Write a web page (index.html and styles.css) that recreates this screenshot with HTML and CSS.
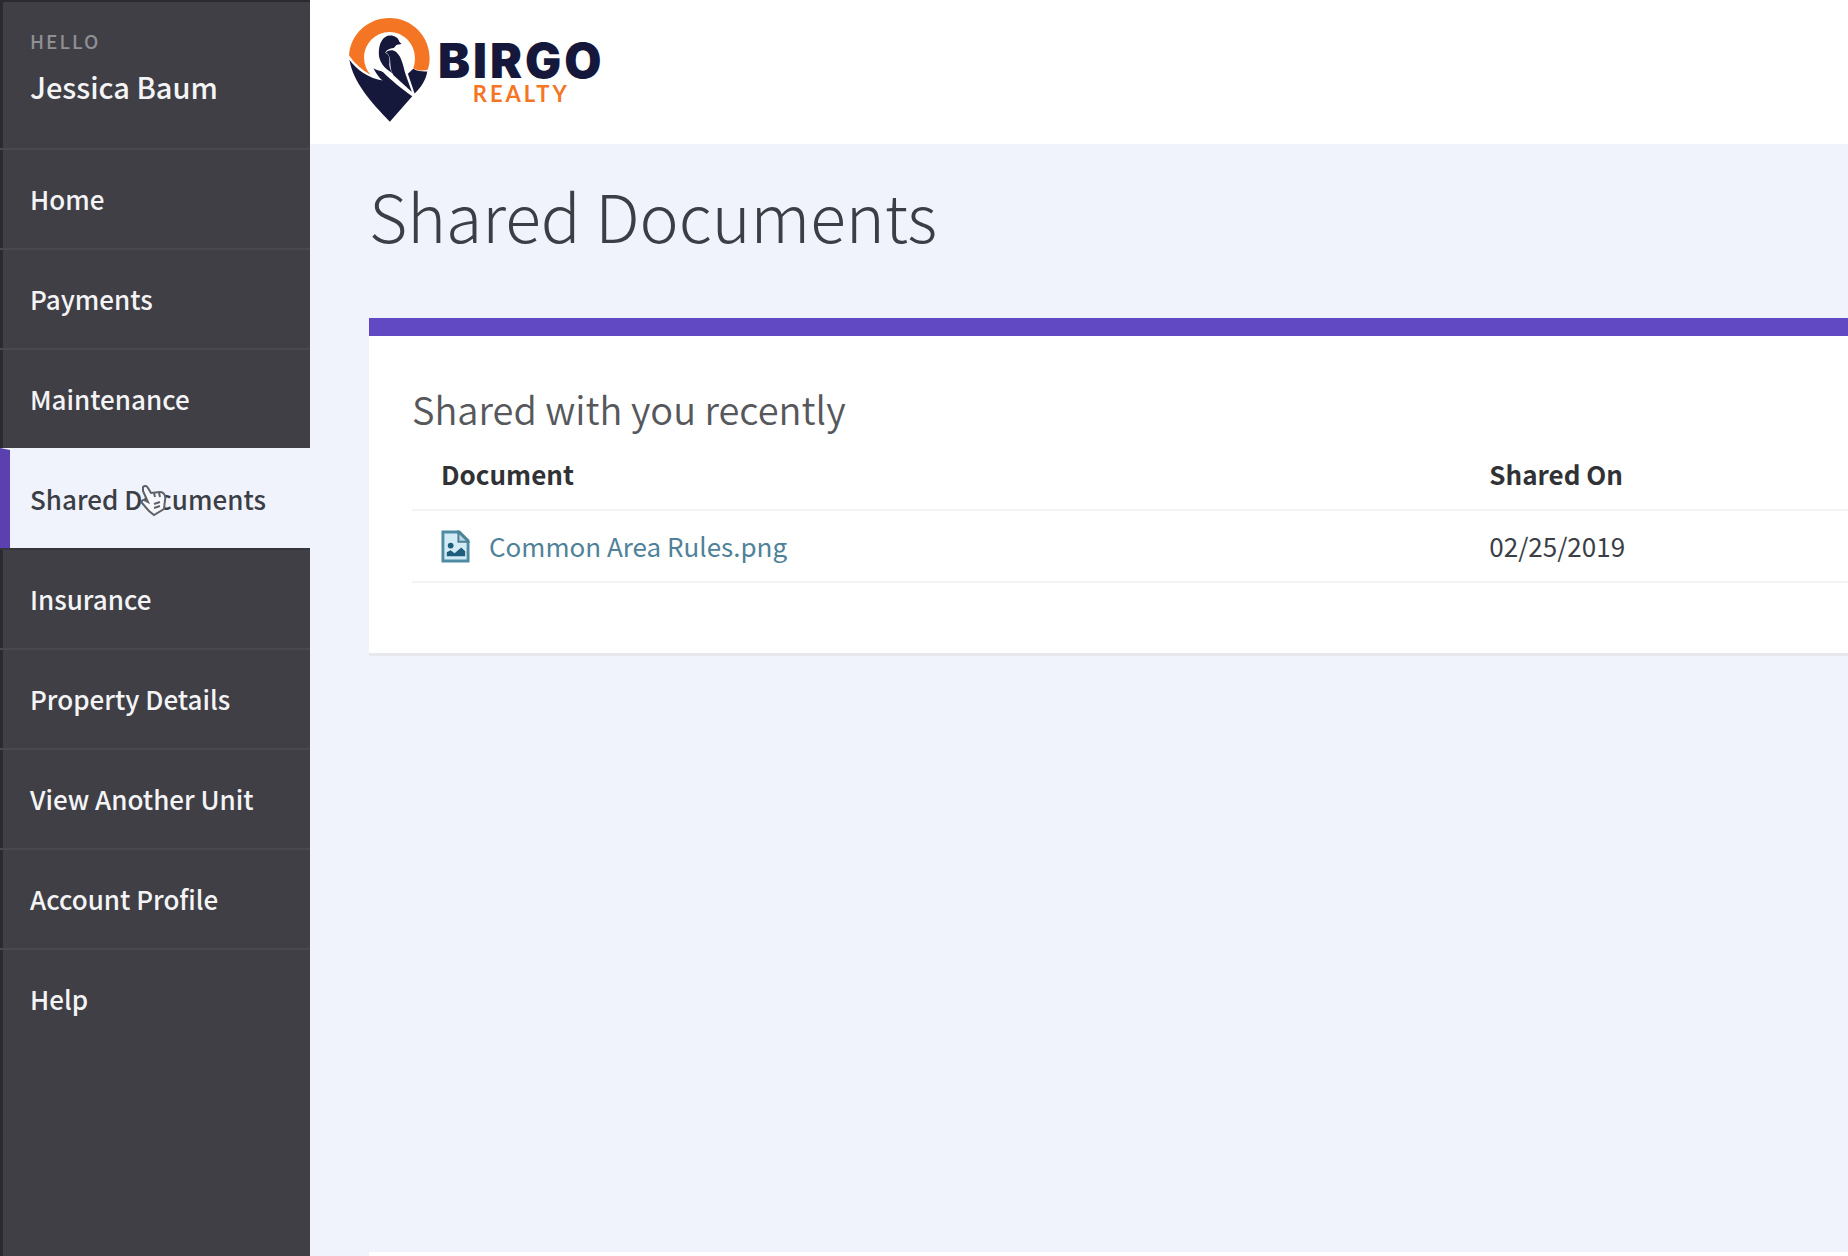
FILE: index.html
```html
<!DOCTYPE html>
<html lang="en">
<head>
<meta charset="utf-8">
<meta name="viewport" content="width=device-width, initial-scale=1">
<title>Shared Documents - Birgo Realty</title>
<link rel="stylesheet" href="styles.css">
</head>
<body>
<div class="app">
  <aside class="sidebar">
    <div class="greeting">
      <span class="greeting-label">HELLO</span>
      <span class="greeting-name">Jessica Baum</span>
    </div>
    <nav class="nav" aria-label="Main">
      <a class="nav-item" href="#home">Home</a>
      <a class="nav-item" href="#payments">Payments</a>
      <a class="nav-item" href="#maintenance">Maintenance</a>
      <a class="nav-item active" href="#documents" aria-current="page">Shared Documents
        <svg class="pointer" viewBox="0 0 28 34" aria-hidden="true">
          <path d="M3 3 C5 1 7 2 8 4 L11 9 L20 8 C24 8 26 12 25 16 L24 25 L14 31 L9 27 L2 19 C1 16 4 15 6 17 L8 18 L3 7 Z"/>
          <path d="M14 9 L15 13 M19 9 L20 13 M14 20 L20 18 M14 24 L20 22"/>
        </svg>
      </a>
      <a class="nav-item" href="#insurance">Insurance</a>
      <a class="nav-item" href="#property">Property Details</a>
      <a class="nav-item" href="#unit">View Another Unit</a>
      <a class="nav-item" href="#profile">Account Profile</a>
      <a class="nav-item" href="#help">Help</a>
    </nav>
  </aside>
  <div class="page">
    <header class="topbar">
      <a class="brand" href="#home" aria-label="Birgo Realty">
        <svg class="brand-mark" viewBox="57 53 242 311" aria-hidden="true">
          <path fill="#f47624" d="M57 165C61 101 114 53 178 53C245 53 298 107 298 173C298 186 296 198 292 208C278 212 261 211 249 203C253 193 254 183 254 172C254 130 220 95 178 95C136 95 102 130 102 172C102 192 109 209 121 223C96 209 75 190 57 165Z"/>
          <path fill="#15183a" d="M58 178C78 207 119 235 158 240C149 234 143 226 130 203C139 210 151 209 159 215C182 238 215 265 246 287L179 363C124 306 70 247 58 178Z"/>
          <path fill="#15183a" d="M233 220L249 205C264 214 278 213 291 213C287 238 272 261 253 279Z"/>
          <path fill="#15183a" d="M180 105C194 105 205 112 207 123L214 131L201 133C196 134 195 141 190 143C178 144 169 148 165 158C175 160 179 170 178 184C176 197 179 207 188 219C161 203 146 184 146 158C146 129 158 105 180 105Z"/>
          <path fill="#15183a" d="M167 156C176 147 190 148 198 155C216 171 218 196 226 221L245 274L190 224C180 207 181 196 180 180C179 167 174 159 167 156Z"/>
        </svg>
        <span class="brand-text">
          <span class="brand-name">BIRGO</span>
          <span class="brand-sub">REALTY</span>
        </span>
      </a>
    </header>
    <main class="content">
      <h1 class="title">Shared Documents</h1>
      <section class="card">
        <h2 class="card-title">Shared with you recently</h2>
        <table class="docs">
          <thead>
            <tr><th class="col-doc" scope="col">Document</th><th scope="col">Shared On</th></tr>
          </thead>
          <tbody>
            <tr>
              <td><a class="doc-link" href="#common-area-rules">
                <svg class="file-icon" viewBox="0 0 30 34" aria-hidden="true">
                  <path fill="#d3ebf5" stroke="#4f8ba3" stroke-width="3" d="M2 2H19L28 11V32H2Z"/>
                  <path fill="#b9d7e4" stroke="#4f7f93" stroke-width="2" d="M18 2V12H28Z"/>
                  <circle cx="10" cy="16" r="3" fill="#1f5d7c"/>
                  <path fill="#1f5d7c" d="M6 27V23L10 21L14 24L21 18L25 22V27Z"/>
                </svg>
                <span>Common Area Rules.png</span></a></td>
              <td>02/25/2019</td>
            </tr>
          </tbody>
        </table>
      </section>
    </main>
    <div class="next-card"></div>
  </div>
</div>
</body>
</html>
```
FILE: styles.css
```css
* {
  box-sizing: border-box;
}

body {
  margin: 0;
  background: #f0f3fc;
  color: #3b3e44;
  font-family: "Noto Sans CJK SC", "Noto Sans", sans-serif;
  font-size: 26px;
  line-height: 36px;
}

a {
  color: inherit;
  text-decoration: none;
}

.app {
  display: flex;
  min-height: 100vh;
}

/* Sidebar */
.sidebar {
  flex: 0 0 310px;
  background: #3f3f45;
  box-shadow: inset 3px 2px #2b2a33;
  color: #f4f4f6;
  font-weight: 500;
}

.greeting {
  display: flex;
  flex-direction: column;
  gap: 12px;
  height: 148px;
  padding: 26px 30px 0;
}

.greeting-label {
  color: #8f8f95;
  font-size: 19px;
  line-height: 30px;
  letter-spacing: 2px;
}

.greeting-name {
  font-size: 29px;
}

.nav-item {
  position: relative;
  display: flex;
  align-items: center;
  height: 100px;
  padding-left: 30px;
  border-top: 2px solid #484850;
}

.nav-item.active {
  padding-left: 20px;
  border-top-color: #f0f3fc;
  border-left: 10px solid #5b41b0;
  background: #f0f3fc;
  color: #3b3e44;
}

.active + .nav-item {
  border-top-color: #35353d;
}

.pointer {
  position: absolute;
  left: 130px;
  top: 34px;
  width: 28px;
  height: 34px;
  fill: #f6f8fd;
  stroke: #5d6168;
  stroke-width: 2;
}

/* Top bar */
.page {
  display: flex;
  flex: 1;
  flex-direction: column;
  min-width: 0;
}

.topbar {
  height: 144px;
  padding: 18px 39px;
  background: #fff;
}

.brand {
  display: inline-flex;
  gap: 8px;
}

.brand-mark {
  width: 81px;
  height: 104px;
}

.brand-text {
  display: flex;
  flex-direction: column;
  padding-top: 18px;
}

.brand-name {
  color: #15183a;
  font-family: Inter, sans-serif;
  font-size: 48px;
  font-weight: 900;
  line-height: 50px;
  letter-spacing: 3px;
}

.brand-sub {
  align-self: center;
  color: #f47624;
  font-family: Lato, sans-serif;
  font-size: 22px;
  font-weight: 700;
  line-height: 16px;
  letter-spacing: 3px;
}

/* Content */
.content {
  flex: 1;
  padding: 26px 0 0 59px;
}

.title {
  margin: 0;
  font-size: 66px;
  font-weight: 300;
  line-height: 88px;
}

.card {
  margin-top: 60px;
  padding: 48px 0 70px 43px;
  border-top: 18px solid #6249c4;
  border-bottom: 3px solid #e6e8ee;
  background: #fff;
}

.card-title {
  margin: 0 0 4px;
  color: #56585c;
  font-size: 38px;
  font-weight: 350;
  line-height: 50px;
}

.docs {
  width: 100%;
  border-collapse: collapse;
  table-layout: fixed;
}

.docs th,
.docs td {
  height: 72px;
  padding: 0 0 0 29px;
  border-bottom: 2px solid #f4f4f6;
  text-align: left;
}

.docs th {
  color: #303236;
  font-weight: 700;
}

.docs .col-doc {
  width: 73%;
}

.doc-link {
  display: flex;
  align-items: center;
  gap: 19px;
  color: #4f8299;
}

.file-icon {
  width: 29px;
  height: 33px;
}

/* Top edge of the section that follows */
.next-card {
  height: 4px;
  margin-left: 59px;
  background: #fff;
}
```
